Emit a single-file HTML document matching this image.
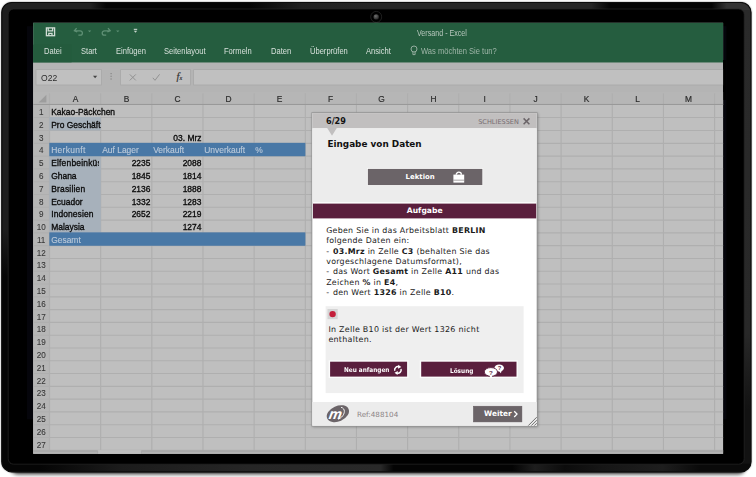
<!DOCTYPE html>
<html lang="de">
<head>
<meta charset="utf-8">
<title>Versand - Excel</title>
<style>
html,body{margin:0;padding:0;}
body{width:756px;height:477px;background:#fff;position:relative;overflow:hidden;font-family:"Liberation Sans",sans-serif;}
#art{position:absolute;left:0;top:0;}
.t{position:absolute;white-space:nowrap;transform-origin:0 50%;}
.x{font-family:"Liberation Sans",sans-serif;}
.tab{top:44.6px;font-size:9px;line-height:12px;color:#d6e0da;transform:scaleX(.84);}
.ch{position:absolute;top:92.00px;width:51.16px;text-align:center;font-size:9px;line-height:14.4px;color:#2c2c2c;transform:scaleX(.93);-webkit-text-stroke:0.2px;}
.rn{position:absolute;left:33.2px;width:16.30px;text-align:center;font-size:9.3px;line-height:14.4px;height:12.79px;color:#363636;transform:scaleX(.87);-webkit-text-stroke:0.1px;}
.c{position:absolute;width:51.16px;height:12.79px;line-height:14.4px;font-size:8.8px;transform:scaleX(.96);transform-origin:1.2px 50%;color:#0a0a0a;white-space:nowrap;box-sizing:border-box;padding:0 1.7px 0 1.2px;-webkit-text-stroke:0.32px;}
.c.r{text-align:right;transform-origin:49.4px 50%;}
.c.h{color:#bccada;line-height:14px;-webkit-text-stroke:0.12px;}
.c.clip{overflow:hidden;padding-right:0;}
.d{font-family:"DejaVu Sans","Liberation Sans",sans-serif;}
</style>
</head>
<body>
<svg id="art" width="756" height="477" viewBox="0 0 756 477">
<defs>
  <linearGradient id="rim" x1="0" y1="0" x2="1" y2="0">
    <stop offset="0" stop-color="#1d1d1d"/><stop offset=".5" stop-color="#1d1d1d"/><stop offset="1" stop-color="#292929"/>
  </linearGradient>
  <linearGradient id="rimtop" x1="0" y1="0" x2="1" y2="0">
    <stop offset="0" stop-color="#222"/><stop offset=".118" stop-color="#222"/><stop offset=".14" stop-color="#040404"/><stop offset=".33" stop-color="#040404"/>
    <stop offset=".4" stop-color="#202020"/><stop offset=".5" stop-color="#262626"/><stop offset=".785" stop-color="#262626"/><stop offset=".81" stop-color="#040404"/>
    <stop offset=".945" stop-color="#040404"/><stop offset=".965" stop-color="#333"/><stop offset="1" stop-color="#333"/>
  </linearGradient>
  <linearGradient id="rimbot" x1="0" y1="0" x2="1" y2="0">
    <stop offset="0" stop-color="#050505"/><stop offset=".052" stop-color="#050505"/><stop offset=".16" stop-color="#1c1c1c"/><stop offset=".33" stop-color="#262626"/>
    <stop offset=".505" stop-color="#292929"/><stop offset=".522" stop-color="#040404"/><stop offset=".68" stop-color="#040404"/><stop offset=".71" stop-color="#1e1e1e"/>
    <stop offset=".75" stop-color="#0c0c0c"/><stop offset=".8" stop-color="#161616"/><stop offset=".88" stop-color="#1e1e1e"/><stop offset=".93" stop-color="#0a0a0a"/><stop offset="1" stop-color="#0a0a0a"/>
  </linearGradient>
  <linearGradient id="riml" x1="0" y1="0" x2="0" y2="1">
    <stop offset="0" stop-color="#1d1d1d"/><stop offset=".48" stop-color="#1d1d1d"/><stop offset=".58" stop-color="#060606"/><stop offset="1" stop-color="#060606"/>
  </linearGradient>
  <linearGradient id="rimr" x1="0" y1="0" x2="0" y2="1">
    <stop offset="0" stop-color="#2a2a2a"/><stop offset=".7" stop-color="#282828"/><stop offset=".86" stop-color="#121212"/><stop offset="1" stop-color="#121212"/>
  </linearGradient>
  <clipPath id="fclip"><rect x="1.8" y="2.5" width="749.2" height="469.3" rx="10"/></clipPath>
  <filter id="soft" x="-5%" y="-5%" width="110%" height="110%"><feGaussianBlur stdDeviation="0.9"/></filter>
  <radialGradient id="lens" cx=".4" cy=".35" r=".7"><stop offset="0" stop-color="#707070"/><stop offset="1" stop-color="#222"/></radialGradient>
  <filter id="blur" x="-10%" y="-100%" width="120%" height="300%"><feGaussianBlur stdDeviation="2.2"/></filter>
  <filter id="dsh" x="-10%" y="-10%" width="120%" height="120%"><feGaussianBlur stdDeviation="1.6"/></filter>
</defs>
<!-- monitor -->
<rect x="12" y="464" width="732" height="10" rx="5" fill="#000" opacity=".85" filter="url(#blur)"/>
<rect x="1.8" y="2.5" width="749.2" height="469.3" rx="10" fill="#000" opacity=".7" filter="url(#soft)"/>
<g clip-path="url(#fclip)">
<rect x="1" y="1" width="752" height="472" fill="url(#rim)"/>
<rect x="1" y="1" width="9" height="475" fill="url(#riml)"/>
<rect x="742" y="1" width="12" height="475" fill="url(#rimr)"/>
<rect x="1" y="1" width="752" height="9" fill="url(#rimtop)"/>
<rect x="1" y="463.6" width="752" height="10" fill="url(#rimbot)"/>
</g>
<rect x="1.8" y="2.5" width="749.2" height="469.3" rx="10" fill="none" stroke="#0c0c0c" stroke-width="1.2"/>
<rect x="8.2" y="9" width="736" height="455.2" rx="5.5" fill="#000" stroke="#262626" stroke-width="0.7"/>
<rect x="27" y="26.2" width="699.4" height="393" fill="#05050b"/>
<circle cx="376.2" cy="16.9" r="5.5" fill="none" stroke="#1e1e1e" stroke-width="1"/>
<circle cx="376.2" cy="16.9" r="2.7" fill="url(#lens)"/>
<!-- excel -->
<rect x="33.2" y="22.8" width="689.90" height="431.00" fill="#bfbfbf"/>
<rect x="33.2" y="22.8" width="689.90" height="39.90" fill="#255d3f"/>
<rect x="33.2" y="44.6" width="38.4" height="18.10" fill="#245b3d"/>
<rect x="33.2" y="62.7" width="689.90" height="29.30" fill="#b4b4b4"/>
<rect x="36.0" y="69.6" width="65.40" height="15.4" fill="#c0c0c0" stroke="#a8a8a8" stroke-width="0.8"/>
<rect x="120.6" y="69.6" width="69.80" height="15.4" fill="#c0c0c0" stroke="#a8a8a8" stroke-width="0.8"/>
<rect x="193.6" y="69.6" width="530.50" height="15.4" fill="#c0c0c0" stroke="#a8a8a8" stroke-width="0.8"/>
<rect x="723.1" y="60" width="3" height="40" fill="#000"/>
<rect x="33.2" y="92.0" width="689.90" height="12.45" fill="#b6b6b6"/>
<rect x="33.2" y="104.45" width="16.30" height="345.85" fill="#b6b6b6"/>
<path d="M38.6 102.6h7.8v-7.8z" fill="#9d9d9d"/>
<g stroke="#afafaf" stroke-width="1.12" fill="none"><path d="M49.50 93.20V450.30"/><path d="M100.66 93.20V450.30"/><path d="M151.82 93.20V450.30"/><path d="M202.98 93.20V450.30"/><path d="M254.14 93.20V450.30"/><path d="M305.30 93.20V450.30"/><path d="M356.46 93.20V450.30"/><path d="M407.62 93.20V450.30"/><path d="M458.78 93.20V450.30"/><path d="M509.94 93.20V450.30"/><path d="M561.10 93.20V450.30"/><path d="M612.26 93.20V450.30"/><path d="M663.42 93.20V450.30"/><path d="M714.58 93.20V450.30"/><path d="M33.2 104.45H723.1"/><path d="M33.2 117.50H723.1"/><path d="M33.2 130.55H723.1"/><path d="M33.2 143.34H723.1"/><path d="M33.2 156.13H723.1"/><path d="M33.2 168.92H723.1"/><path d="M33.2 181.71H723.1"/><path d="M33.2 194.50H723.1"/><path d="M33.2 207.29H723.1"/><path d="M33.2 220.08H723.1"/><path d="M33.2 232.87H723.1"/><path d="M33.2 245.66H723.1"/><path d="M33.2 258.45H723.1"/><path d="M33.2 271.24H723.1"/><path d="M33.2 284.03H723.1"/><path d="M33.2 296.82H723.1"/><path d="M33.2 309.61H723.1"/><path d="M33.2 322.40H723.1"/><path d="M33.2 335.19H723.1"/><path d="M33.2 347.98H723.1"/><path d="M33.2 360.77H723.1"/><path d="M33.2 373.56H723.1"/><path d="M33.2 386.35H723.1"/><path d="M33.2 399.14H723.1"/><path d="M33.2 411.93H723.1"/><path d="M33.2 424.72H723.1"/><path d="M33.2 437.51H723.1"/><path d="M33.2 450.30H723.1"/></g>
<path d="M33.2 104.45H723.1" stroke="#989898" stroke-width="1"/>
<rect x="49.30" y="117.00" width="51.46" height="13.39" fill="#a7b1bb"/>
<rect x="49.30" y="155.63" width="51.46" height="77.34" fill="#a7b1bb"/>
<rect x="49.30" y="142.84" width="256.10" height="13.39" fill="#4978a6"/>
<rect x="49.30" y="232.37" width="256.10" height="13.39" fill="#4978a6"/>
<rect x="99.66" y="105.05" width="2" height="11.59" fill="#bfbfbf"/>
<rect x="33.2" y="450.70" width="689.90" height="3.10" fill="#b3b3b3"/>
<path d="M33.2 451.00H723.1" stroke="#a2a2a2" stroke-width="1"/>
<rect x="97.6" y="450.10" width="43.8" height="3.70" fill="#bfbfbf"/>
<path d="M97.6 450.70V453.8M141.4 450.70V453.8" stroke="#a6a6a6" stroke-width="0.8"/>
<!-- quick access icons -->
<g fill="none" stroke="#d2ddd6" stroke-width="1.3">
  <rect x="46.4" y="27.9" width="8.2" height="7.8"/>
  <path d="M48.2 27.9v2.9h4.4v-2.9M48.8 35.5v-2.1h3.2v2.1"/>
</g>
<g fill="none" stroke="#5f9075" stroke-width="1.3">
  <path d="M76.6 28.2L74.4 30.8l2.8 1.2M74.6 30.8h5.6a2.2 2.2 0 0 1 0 4.4h-1.8"/>
  <path d="M108 28.2l2.2 2.6-2.8 1.2M110 30.8h-5.6a2.2 2.2 0 0 0 0 4.4h1.8"/>
</g>
<g fill="#5f9075"><path d="M88 30.4h3.2l-1.6 1.9z"/><path d="M116.2 30.4h3.2l-1.6 1.9z"/></g>
<g fill="#c9d6ce"><rect x="133.8" y="28.8" width="3.4" height="1.1"/><path d="M133.8 30.8h3.4l-1.7 2z"/></g>
<!-- lightbulb -->
<g fill="none" stroke="#a0b6a9" stroke-width="0.9"><circle cx="414" cy="49" r="3"/><path d="M412.9 52v2.6h2.2v-2.6"/></g>
<!-- formula bar glyphs -->
<path d="M93 75.8h4.2l-2.1 2.5z" fill="#444"/>
<g fill="#858585"><rect x="110.5" y="73" width="1.2" height="1.2"/><rect x="110.5" y="75.7" width="1.2" height="1.2"/><rect x="110.5" y="78.4" width="1.2" height="1.2"/></g>
<g fill="none" stroke="#929292" stroke-width="1"><path d="M129.8 74.4l6 6M135.8 74.4l-6 6"/><path d="M152.8 77.8l2.2 2.5 4.6-6"/></g>

<!-- dialog -->
<rect x="312.6" y="113.4" width="225.4" height="313.6" fill="#000" opacity=".32" filter="url(#dsh)"/>
<rect x="311.9" y="112.7" width="225.2" height="313.4" fill="#fff" stroke="#8c8c8c" stroke-width="0.8"/>
<rect x="312.3" y="113.1" width="224.4" height="15.2" fill="#c1bfbf"/>
<rect x="312.3" y="128.3" width="224.4" height="73.9" fill="#ececec"/>
<path d="M327.2 128.1h9.6l-4.8 7.6z" fill="#c1bfbf"/>
<path d="M523.6 118.4l5.8 5.8M529.4 118.4l-5.8 5.8" stroke="#6b6468" stroke-width="1.5" fill="none"/>
<rect x="367.4" y="168.5" width="115.4" height="16.9" fill="#6b6468" stroke="#f9f9f9" stroke-width="0.8"/>
<g><path d="M456.2 174.8a2.6 2.6 0 0 1 5.2 0" fill="none" stroke="#fff" stroke-width="1.3"/><rect x="453.4" y="174.6" width="10.8" height="8" fill="#fff"/><rect x="453.4" y="179.8" width="10.8" height="0.6" fill="#6b6468"/></g>
<rect x="313" y="203.6" width="223.2" height="14.8" fill="#5a1f3d"/>
<rect x="325.6" y="306.2" width="198" height="86.9" fill="#efefef"/>
<rect x="327.5" y="309" width="10.2" height="10.2" fill="#d4d4d4"/>
<circle cx="332.6" cy="314.1" r="3.2" fill="#c41e3a"/>
<rect x="328.7" y="360.3" width="79.8" height="17.7" fill="#fcfcfc"/>
<rect x="330.1" y="361.7" width="77" height="14.9" fill="#5a1f3d"/>
<rect x="419.8" y="360.3" width="98.1" height="17.7" fill="#fcfcfc"/>
<rect x="421.2" y="361.7" width="95.3" height="14.9" fill="#5a1f3d"/>
<!-- refresh icon -->
<g transform="translate(397.9 369.9)" fill="none" stroke="#fff" stroke-width="1.5">
  <path d="M-3.1 0.9A3.2 3.2 0 0 1 1.2 -3"/><path d="M3.1 -0.9A3.2 3.2 0 0 1 -1.2 3"/>
  <path d="M0.3 -5.2L3.4 -2.9L0.1 -1.1z" fill="#fff" stroke="none"/><path d="M-0.3 5.2L-3.4 2.9L-0.1 1.1z" fill="#fff" stroke="none"/>
</g>
<!-- help bubbles -->
<g fill="#fff">
  <ellipse cx="499.2" cy="368" rx="4.8" ry="3.5"/><path d="M498.6 370.6l2.2 2.6l1.2-3.4z"/>
  <ellipse cx="490.9" cy="371.9" rx="6.6" ry="4.3" stroke="#5a1f3d" stroke-width="0.9"/><path d="M489.2 375l1.4 3h.8l1.2-3z"/>
</g>
<text x="490.9" y="374.6" font-size="6.2" font-weight="bold" text-anchor="middle" fill="#5a1f3d" font-family="Liberation Sans,sans-serif">?</text>
<text x="499.6" y="370.4" font-size="5.8" font-weight="bold" text-anchor="middle" fill="#5a1f3d" font-family="Liberation Sans,sans-serif">?</text>
<rect x="312.3" y="402" width="224.4" height="23.7" fill="#ececec"/>
<!-- logo -->
<g transform="translate(337.8 413.5)">
  <ellipse cx="0" cy="0.2" rx="11.7" ry="7.7" transform="rotate(-24)" fill="#6b6468"/>
  <path d="M3.2 -6.2C8.4 -5.2 7.6 2.6 0.4 5.8" fill="none" stroke="#f2f2f2" stroke-width="1"/>
  <text x="-2.2" y="5" font-family="Liberation Sans,sans-serif" font-style="italic" font-weight="bold" font-size="14.5" text-anchor="middle" fill="#fff" transform="skewX(-10)">m</text>
</g>
<rect x="473.4" y="406.2" width="48.5" height="15.7" fill="#6b6468" stroke="#5f585c" stroke-width="0.5"/>
<path d="M514.2 411.2l2.8 2.9-2.8 2.9" fill="none" stroke="#fff" stroke-width="1.3"/>
<g stroke="#6e6e6e" stroke-width="1"><path d="M536.7 417.2l-8.4 8.4M536.7 420.2l-5.4 5.4M536.7 423.2l-2.4 2.4"/></g>
</svg>

<div class="t" style="left:416.6px;top:27.2px;font-size:8.8px;line-height:12px;color:#b7c7bd;transform:scaleX(.81)">Versand - Excel</div>
<div class="t tab" style="left:43.6px">Datei</div>
<div class="t tab" style="left:81px">Start</div>
<div class="t tab" style="left:115.6px">Einfügen</div>
<div class="t tab" style="left:164px">Seitenlayout</div>
<div class="t tab" style="left:224.2px">Formeln</div>
<div class="t tab" style="left:271.2px">Daten</div>
<div class="t tab" style="left:309.8px">Überprüfen</div>
<div class="t tab" style="left:366.4px">Ansicht</div>
<div class="t tab" style="left:420.6px;color:#a0b6a9">Was möchten Sie tun?</div>
<div class="t" style="left:40.6px;top:71.6px;font-size:9.2px;line-height:12px;color:#2b2b2b;transform:scaleX(.93)">O22</div>
<div class="t" style="left:176.6px;top:71px;font-family:'Liberation Serif',serif;font-style:italic;font-size:10.4px;line-height:12px;color:#333;-webkit-text-stroke:0.2px">f<span style="font-size:6px">x</span></div>
<div class="rn" style="top:105.05px">1</div>
<div class="rn" style="top:117.50px">2</div>
<div class="rn" style="top:130.55px">3</div>
<div class="rn" style="top:143.34px">4</div>
<div class="rn" style="top:156.13px">5</div>
<div class="rn" style="top:168.92px">6</div>
<div class="rn" style="top:181.71px">7</div>
<div class="rn" style="top:194.50px">8</div>
<div class="rn" style="top:207.29px">9</div>
<div class="rn" style="top:220.08px">10</div>
<div class="rn" style="top:232.87px">11</div>
<div class="rn" style="top:245.66px">12</div>
<div class="rn" style="top:258.45px">13</div>
<div class="rn" style="top:271.24px">14</div>
<div class="rn" style="top:284.03px">15</div>
<div class="rn" style="top:296.82px">16</div>
<div class="rn" style="top:309.61px">17</div>
<div class="rn" style="top:322.40px">18</div>
<div class="rn" style="top:335.19px">19</div>
<div class="rn" style="top:347.98px">20</div>
<div class="rn" style="top:360.77px">21</div>
<div class="rn" style="top:373.56px">22</div>
<div class="rn" style="top:386.35px">23</div>
<div class="rn" style="top:399.14px">24</div>
<div class="rn" style="top:411.93px">25</div>
<div class="rn" style="top:424.72px">26</div>
<div class="rn" style="top:437.51px">27</div>
<div class="ch" style="left:49.50px">A</div>
<div class="ch" style="left:100.66px">B</div>
<div class="ch" style="left:151.82px">C</div>
<div class="ch" style="left:202.98px">D</div>
<div class="ch" style="left:254.14px">E</div>
<div class="ch" style="left:305.30px">F</div>
<div class="ch" style="left:356.46px">G</div>
<div class="ch" style="left:407.62px">H</div>
<div class="ch" style="left:458.78px">I</div>
<div class="ch" style="left:509.94px">J</div>
<div class="ch" style="left:561.10px">K</div>
<div class="ch" style="left:612.26px">L</div>
<div class="ch" style="left:663.42px">M</div>
<div class="c " style="left:49.50px;top:105.05px;">Kakao-Päckchen</div>
<div class="c " style="left:49.50px;top:117.50px;">Pro Geschäft</div>
<div class="c r" style="left:151.82px;top:130.55px;">03. Mrz</div>
<div class="c h" style="left:49.50px;top:143.34px;letter-spacing:.33px">Herkunft</div>
<div class="c h" style="left:100.66px;top:143.34px;">Auf Lager</div>
<div class="c h" style="left:151.82px;top:143.34px;">Verkauft</div>
<div class="c h" style="left:202.98px;top:143.34px;">Unverkauft</div>
<div class="c h" style="left:254.14px;top:143.34px;">%</div>
<div class="c clip" style="left:49.50px;top:156.13px;letter-spacing:.2px">Elfenbeinküste</div>
<div class="c r" style="left:100.66px;top:156.13px;">2235</div>
<div class="c r" style="left:151.82px;top:156.13px;">2088</div>
<div class="c " style="left:49.50px;top:168.92px;">Ghana</div>
<div class="c r" style="left:100.66px;top:168.92px;">1845</div>
<div class="c r" style="left:151.82px;top:168.92px;">1814</div>
<div class="c " style="left:49.50px;top:181.71px;letter-spacing:.2px">Brasilien</div>
<div class="c r" style="left:100.66px;top:181.71px;">2136</div>
<div class="c r" style="left:151.82px;top:181.71px;">1888</div>
<div class="c " style="left:49.50px;top:194.50px;">Ecuador</div>
<div class="c r" style="left:100.66px;top:194.50px;">1332</div>
<div class="c r" style="left:151.82px;top:194.50px;">1283</div>
<div class="c " style="left:49.50px;top:207.29px;letter-spacing:.1px">Indonesien</div>
<div class="c r" style="left:100.66px;top:207.29px;">2652</div>
<div class="c r" style="left:151.82px;top:207.29px;">2219</div>
<div class="c " style="left:49.50px;top:220.08px;">Malaysia</div>
<div class="c r" style="left:151.82px;top:220.08px;">1274</div>
<div class="c h" style="left:49.50px;top:232.87px;">Gesamt</div>

<div class="t d" style="left:326px;top:116.4px;font-size:8.15px;font-weight:bold;line-height:11px;color:#141414">6/29</div>
<div class="t d" style="left:478.2px;top:116.8px;font-size:6.55px;line-height:10px;color:#776c71">SCHLIESSEN</div>
<div class="t d" style="left:327.4px;top:136.6px;font-size:8.87px;font-weight:bold;line-height:14px;color:#111">Eingabe von Daten</div>
<div class="t d" style="left:405.6px;top:171.8px;font-size:6.95px;font-weight:bold;line-height:11px;color:#fff">Lektion</div>
<div class="t d" style="left:313px;top:203.6px;width:223.4px;text-align:center;font-size:7.6px;font-weight:bold;line-height:14.2px;color:#fff">Aufgabe</div>
<div class="t d" style="left:326.2px;top:226.1px;font-size:7.9px;letter-spacing:.27px;line-height:10.3px;color:#1b1b1b">Geben Sie in das Arbeitsblatt <b>BERLIN</b><br>folgende Daten ein:<br><span style="letter-spacing:1.1px">-</span> <b>03.Mrz</b> in Zelle <b>C3</b> (behalten Sie das<br>vorgeschlagene Datumsformat),<br><span style="letter-spacing:1.1px">-</span> das Wort <b>Gesamt</b> in Zelle <b>A11</b> und das<br>Zeichen <b>%</b> in <b>E4</b>,<br><span style="letter-spacing:1.1px">-</span> den Wert <b>1326</b> in Zelle <b>B10</b>.</div>
<div class="t d" style="left:328.4px;top:325.2px;font-size:7.95px;letter-spacing:.27px;line-height:10.3px;color:#1b1b1b">In Zelle B10 ist der Wert 1326 nicht<br>enthalten.</div>
<div class="t d" style="left:344.4px;top:363.6px;font-size:6.4px;font-weight:bold;line-height:13.4px;color:#fff;transform:scaleX(.9)">Neu anfangen</div>
<div class="t d" style="left:449.6px;top:364.8px;font-size:6.4px;font-weight:bold;line-height:13.4px;color:#fff;transform:scaleX(.9)">Lösung</div>
<div class="t d" style="left:357px;top:409.8px;font-size:7.2px;line-height:10px;color:#8d8587">Ref:488104</div>
<div class="t d" style="left:484px;top:406.4px;font-size:7.4px;font-weight:bold;line-height:15.4px;color:#fff">Weiter</div>
</body>
</html>
